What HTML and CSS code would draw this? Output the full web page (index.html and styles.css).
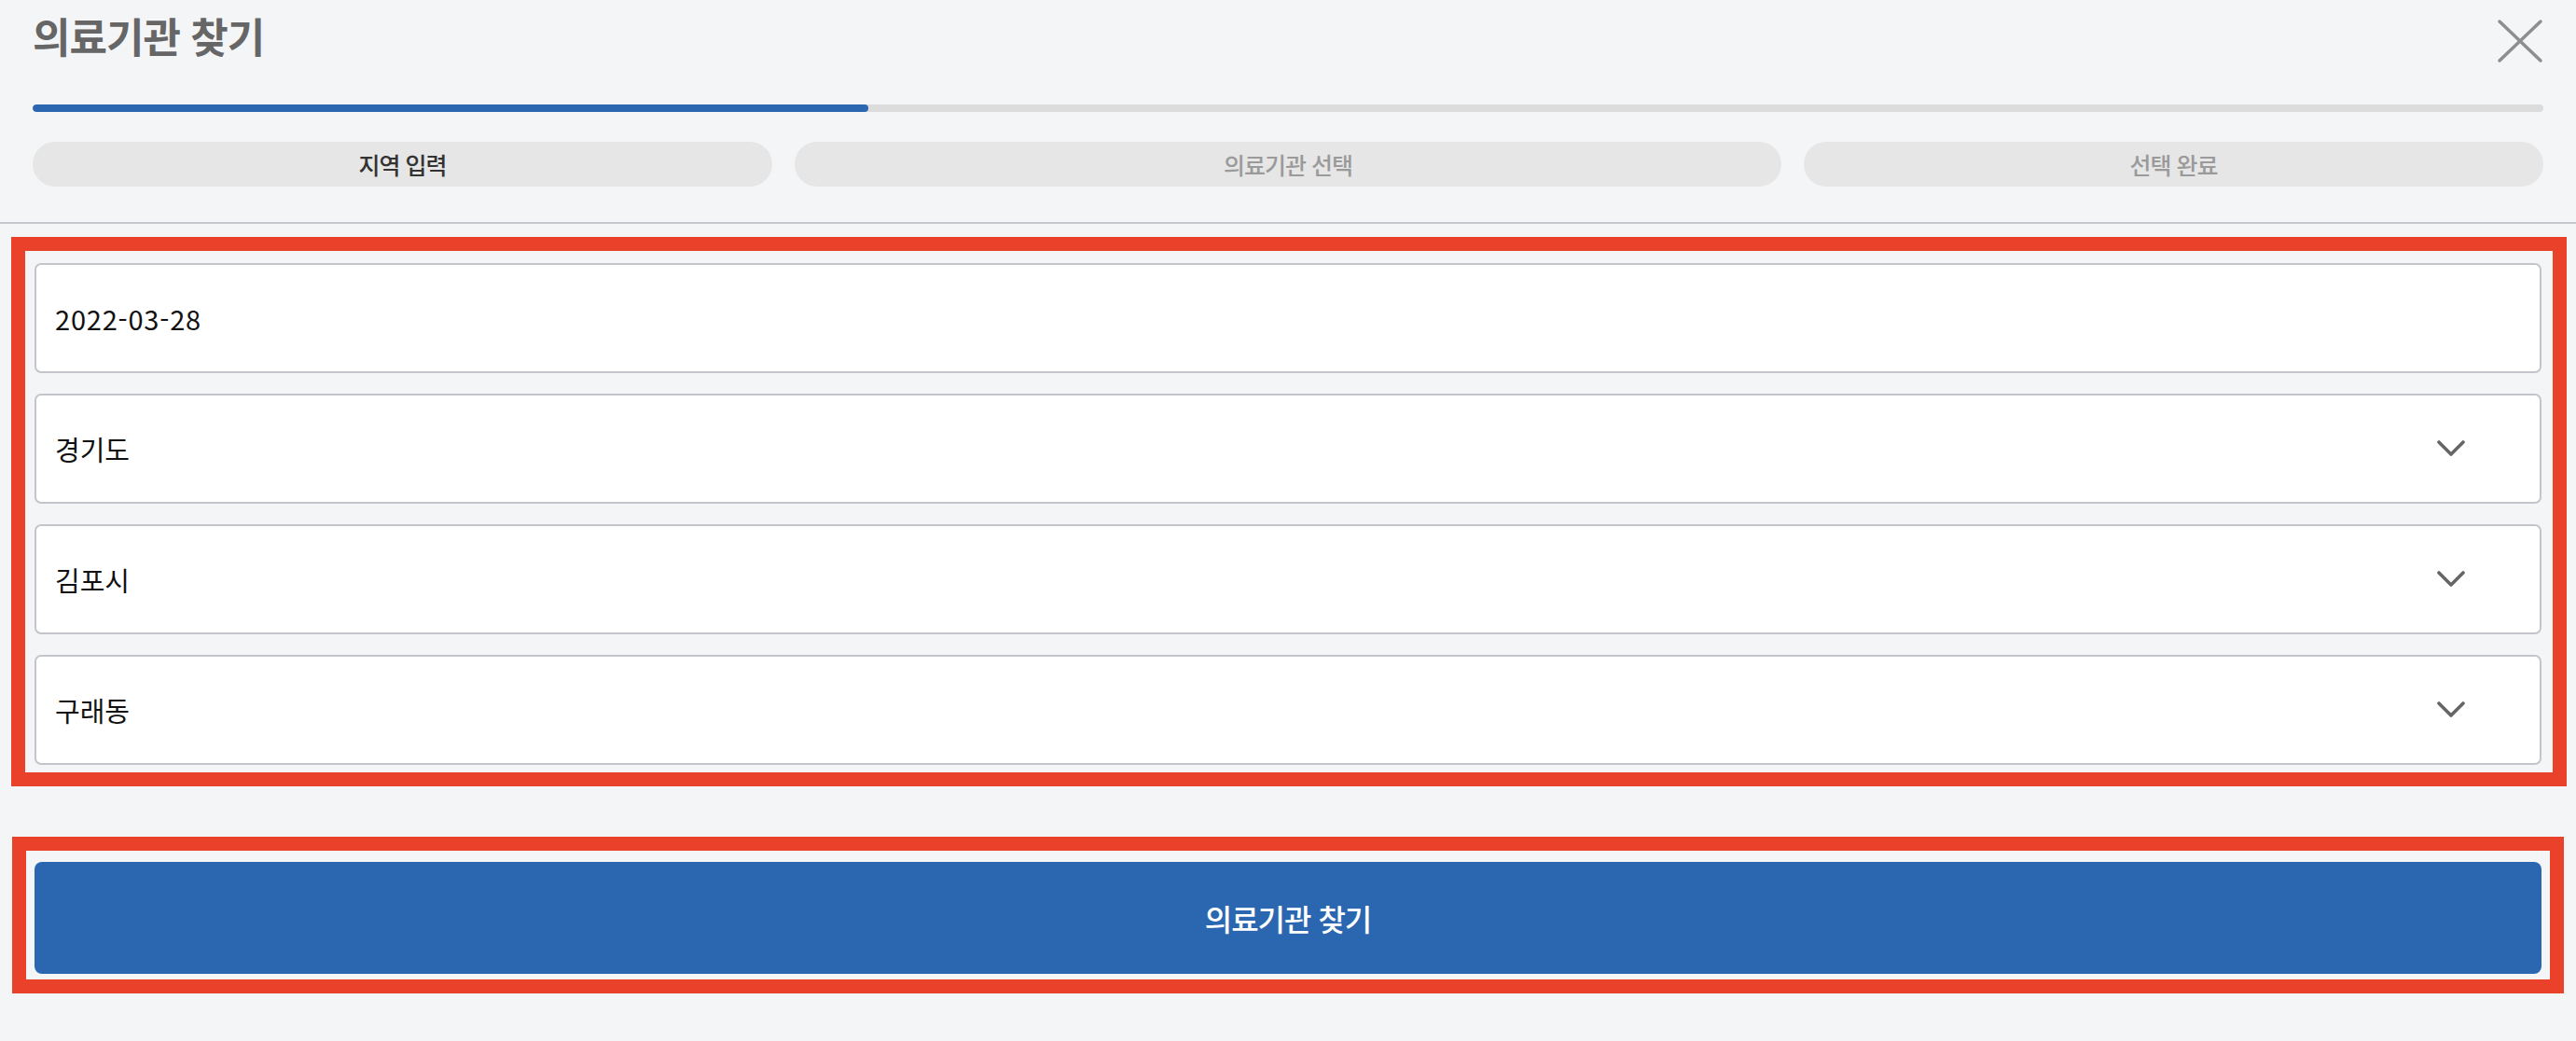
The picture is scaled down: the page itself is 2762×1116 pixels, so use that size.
FILE: index.html
```html
<!DOCTYPE html>
<html lang="ko">
<head>
<meta charset="utf-8">
<title>의료기관 찾기</title>
<link rel="stylesheet" href="styles.css">
</head>
<body>
<header class="header">
  <div class="title-row">
    <h1 class="title">의료기관 찾기</h1>
    <button class="close" aria-label="닫기">
      <svg width="50" height="48" viewBox="0 0 50 48"><path d="M3 3 L47 45 M47 3 L3 45" stroke="#8e8e8e" stroke-width="3.5" stroke-linecap="round" fill="none"/></svg>
    </button>
  </div>
  <div class="progress"><div class="progress-fill" style="width: 33.3%"></div></div>
  <div class="steps">
    <div class="step step-active step-a">지역 입력</div>
    <div class="step step-b">의료기관 선택</div>
    <div class="step step-a">선택 완료</div>
  </div>
</header>
<main class="content">
  <div class="fields annotated ann-fields">
    <div class="field"><span class="field-text field-date">2022-03-28</span></div>
    <div class="field"><span class="field-text">경기도</span><svg class="chev" width="30" height="18" viewBox="0 0 30 18"><path d="M2 2 L15 15 L28 2" stroke="#666" stroke-width="3.6" stroke-linecap="round" stroke-linejoin="round" fill="none"/></svg></div>
    <div class="field"><span class="field-text">김포시</span><svg class="chev" width="30" height="18" viewBox="0 0 30 18"><path d="M2 2 L15 15 L28 2" stroke="#666" stroke-width="3.6" stroke-linecap="round" stroke-linejoin="round" fill="none"/></svg></div>
    <div class="field"><span class="field-text">구래동</span><svg class="chev" width="30" height="18" viewBox="0 0 30 18"><path d="M2 2 L15 15 L28 2" stroke="#666" stroke-width="3.6" stroke-linecap="round" stroke-linejoin="round" fill="none"/></svg></div>
  </div>
  <div class="annotated ann-button">
    <button class="submit">의료기관 찾기</button>
  </div>
</main>
</body>
</html>
```
FILE: styles.css
```css
* { box-sizing: border-box; }
html, body { margin: 0; padding: 0; }
body {
  background: #f4f5f7;
  font-family: "Noto Sans CJK KR", "Noto Sans", sans-serif;
  width: 2762px;
  height: 1116px;
  overflow: hidden;
}
.header {
  padding: 0 35px 38px;
  border-bottom: 2px solid #c5c7cc;
}
.title-row {
  display: flex;
  justify-content: space-between;
  align-items: flex-start;
  height: 68px;
}
.title {
  margin: 8px 0 0;
  font-size: 44px;
  line-height: 60px;
  font-weight: 700;
  color: #666;
  letter-spacing: -1px;
}
.close {
  margin: 20px 0 0;
  padding: 0;
  border: 0;
  background: none;
  width: 50px;
  height: 48px;
  display: block;
}
.close svg { display: block; }
.progress {
  margin-top: 44px;
  height: 8px;
  border-radius: 4px;
  background: #dcdcdc;
  overflow: hidden;
}
.progress-fill {
  height: 100%;
  background: #2b67b0;
  border-radius: 4px;
}
.steps {
  margin-top: 32px;
  display: flex;
  gap: 24px;
}
.step {
  height: 48px;
  border-radius: 24px;
  background: #e6e6e6;
  display: flex;
  align-items: center;
  justify-content: center;
  font-size: 25px;
  font-weight: 500;
  color: #9a9a9a;
  letter-spacing: -1px;
}
.step-a { flex: 3; }
.step-b { flex: 4; }
.step-active { color: #333; }
.content {
  padding: 42px 37px 0;
}
.annotated { position: relative; }
.annotated::after {
  content: "";
  position: absolute;
  border: 15px solid #e9412a;
  pointer-events: none;
}
.ann-fields::after { top: -28px; bottom: -23px; left: -25px; right: -27px; }
.ann-button::after { top: -27px; bottom: -21px; left: -24px; right: -24px; }
.fields {
  display: flex;
  flex-direction: column;
  gap: 22px;
}
.field {
  height: 118px;
  background: #fff;
  border: 2px solid #c3c5cb;
  border-radius: 7px;
  display: flex;
  align-items: center;
  justify-content: space-between;
  padding: 0 80px 0 20px;
}
.field-text {
  font-size: 29px;
  color: #111;
}
.field-date { letter-spacing: 0.8px; }
.chev { display: block; }
.ann-button { margin-top: 104px; }
.submit {
  display: block;
  width: 100%;
  height: 120px;
  border: 0;
  border-radius: 8px;
  background: #2b67b0;
  color: #fff;
  font-family: inherit;
  font-size: 32px;
  font-weight: 500;
  letter-spacing: -1px;
}
```
